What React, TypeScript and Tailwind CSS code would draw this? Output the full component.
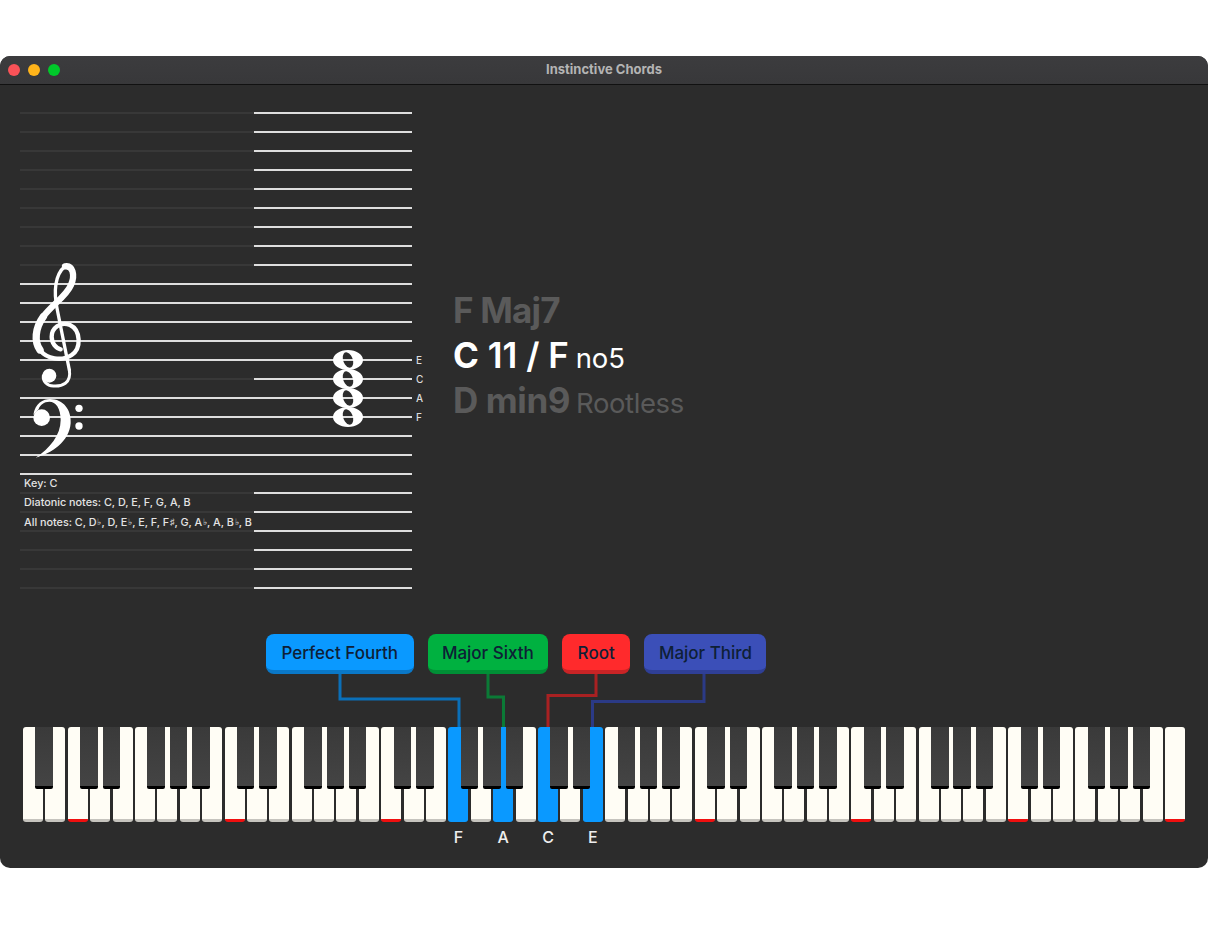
const lines = Array.from({ length: 26 }, (_, i) => i);
// staff lines that run bright all the way across
const fullLines = [9, 10, 11, 12, 13, 15, 16, 17, 18, 19];

const whiteKeys = Array.from({ length: 52 }, (_, i) => i);
const PITCH = 22.39;
// a black key follows C, D, F, G and A, counted from the first C at index 2
const blackKeys = whiteKeys.filter((i) => i < 51 && [0, 1, 3, 4, 5].includes((i + 5) % 7));
const highlighted: Record<number, string> = { 19: "F", 21: "A", 23: "C", 25: "E" };

const labels = [
    { name: "Perfect Fourth", cls: "w-[147.5px] bg-[#0a99ff] border-[#0a78c8]" },
    { name: "Major Sixth", cls: "w-[120px] bg-[#00b140] border-[#008f36]" },
    { name: "Root", cls: "w-[68px] bg-[#ff2a2c] border-[#c92426]" },
    { name: "Major Third", cls: "w-[122px] bg-[#3b4fb8] border-[#2f3f96]" },
];

const Flat = () => <span className="ml-[0.8px] text-[9px] align-[1px]">♭</span>;

const Clefs = () => (
    <svg className="absolute left-0 top-[152px]" width="80" height="210" viewBox="0 0 240 630" fill="none">
        <g stroke="#fff" strokeLinecap="round" strokeLinejoin="round">
            <path d="M148 345 L112 165 C100 110 105 58 135 34" strokeWidth="10" />
            <path d="M135 34 C158 30 166 60 153 90 C138 125 95 150 70 185" strokeWidth="19" />
            <path d="M70 185 C45 220 42 260 60 285" strokeWidth="22" />
            <path d="M60 285 C80 312 125 320 155 300 C185 280 182 225 150 210 C120 198 95 220 95 245 C95 265 108 280 122 283" strokeWidth="13" />
            <path d="M148 345 C155 385 125 395 100 393 C80 392 68 378 70 362" strokeWidth="9" />
        </g>
        <circle cx="88" cy="362" r="21" fill="#fff" />
        <circle cx="65" cy="488" r="25" fill="#fff" />
        <path d="M40 480 C45 445 70 432 90 432 C130 432 155 465 152 505 C148 560 95 595 47 608 C90 580 122 540 122 495 C122 460 108 440 88 440 C72 440 60 450 56 462 Z" fill="#fff" />
        <circle cx="177" cy="460" r="11" fill="#fff" />
        <circle cx="177" cy="513" r="11" fill="#fff" />
    </svg>
);

const WholeNote = () => (
    <svg width="30" height="20" viewBox="0 0 30 20" className="block overflow-visible">
        <path
            fillRule="evenodd"
            fill="#fff"
            d="M0 10 A15 10 0 1 1 30 10 A15 10 0 1 1 0 10 Z M10.7 3.8 A4.5 7.5 -20 1 0 19.3 16.2 A4.5 7.5 -20 1 0 10.7 3.8 Z"
        />
    </svg>
);

const Staff = () => (
    <div className="relative w-[392px] shrink-0">
        {lines.map((i) => {
            const full = fullLines.includes(i);
            return (
                <div key={i} className="flex h-[19px] pt-[9px]">
                    <div className={`h-[2px] w-[234px] ${full ? "bg-[#dedede]" : "bg-[#383838]"}`} />
                    <div className="h-[2px] w-[158px] bg-[#dedede]" />
                </div>
            );
        })}
        <Clefs />
        <div className="absolute left-[313px] top-[247px] flex flex-col">
            {[0, 1, 2, 3].map((n) => (
                <div key={n} className="h-[19px]">
                    <WholeNote />
                </div>
            ))}
        </div>
        <div className="absolute left-[396px] top-[247px] text-[10px] font-medium text-[#dddddd]">
            {["E", "C", "A", "F"].map((n) => (
                <div key={n} className="h-[19px] leading-[20px]">
                    {n}
                </div>
            ))}
        </div>
        <div className="absolute left-[4px] top-[371px] text-[10.8px] font-medium whitespace-nowrap text-[#e4e4e4]">
            <div className="h-[19px] leading-[19px]">Key: C</div>
            <div className="h-[19px] leading-[19px]">Diatonic notes: C, D, E, F, G, A, B</div>
            <div className="h-[19px] leading-[19px]">
                All notes: C, D<Flat />, D, E<Flat />, E, F, F<span className="ml-[0.8px] text-[9px] align-[1px]">♯</span>, G, A<Flat />, A, B<Flat />, B
            </div>
        </div>
    </div>
);

const Chords = () => (
    <div className="ml-[41px] flex flex-col pt-[185px] text-[35px] leading-[45px] whitespace-nowrap">
        <div className="h-[45px] font-bold tracking-[-0.8px] text-[#5a5a5a]">F Maj7</div>
        <div className="h-[45px] font-semibold text-white">
            <span className="font-bold">C</span> 11 / F <span className="-ml-[2px] text-[27.5px] font-normal">no5</span>
        </div>
        <div className="h-[45px] font-bold tracking-[-0.4px] text-[#5a5a5a]">
            D min9 <span className="-ml-[2px] text-[27.5px] font-normal">Rootless</span>
        </div>
    </div>
);

const Connectors = () => (
    <svg className="absolute inset-0" width="1208" height="53" viewBox="0 0 1208 53" fill="none" strokeWidth="3">
        <path d="M340 0 V25 H459 V53" stroke="#0a6fb8" />
        <path d="M488 0 V23 H503.5 V53" stroke="#0b7a36" />
        <path d="M596 0 V21.5 H548 V53" stroke="#a92122" />
        <path d="M704 0 V27.5 H592.5 V53" stroke="#2b3a86" />
    </svg>
);

const Piano = () => (
    <div className="relative mx-[23px] h-[95px]">
        <div className="flex h-full gap-[2.39px]">
            {whiteKeys.map((i) => {
                const on = highlighted[i] !== undefined;
                const isC = (i - 2) % 7 === 0;
                return (
                    <div
                        key={i}
                        className={`flex-1 rounded-[3px] border-b-[3px] ${
                            on
                                ? "border-[#0a99ff] bg-[#0a99ff]"
                                : isC
                                  ? "border-[#f00f0f] bg-[#fffdf5]"
                                  : "border-[#c6c4be] bg-[#fffdf5]"
                        }`}
                    />
                );
            })}
        </div>
        {blackKeys.map((i) => (
            <div
                key={i}
                className="absolute top-0 h-[62px] w-[17.5px] rounded-b-[2px] border-b-[3px] border-black bg-gradient-to-b from-[#3a3a3a] to-[#444444]"
                style={{ left: (i + 1) * PITCH - 1.2 - 8.75 }}
            />
        ))}
    </div>
);

export default function App() {
    return (
        <div className="h-[925px] bg-white pt-[56px] font-[Inter,sans-serif]">
            <div className="flex h-[812px] flex-col overflow-hidden rounded-[10px] bg-[#2c2c2c]">
                <div className="relative flex h-[29px] shrink-0 items-center justify-center border-b border-[#111111] bg-gradient-to-b from-[#3c3c3e] to-[#38383a]">
                    <div className="absolute left-[8px] top-[8px] flex gap-[8px]">
                        <div className="h-[12px] w-[12px] rounded-full bg-[#fa5258]" />
                        <div className="h-[12px] w-[12px] rounded-full bg-[#ffb41a]" />
                        <div className="h-[12px] w-[12px] rounded-full bg-[#00c92a]" />
                    </div>
                    <span className="text-[13px] font-bold text-[#b4b4b4]">Instinctive Chords</span>
                </div>

                <div className="flex pl-[20px] pt-[18px]">
                    <Staff />
                    <Chords />
                </div>

                <div className="mt-[37px] flex gap-[14.33px] pl-[266px]">
                    {labels.map((l) => (
                        <div
                            key={l.name}
                            className={`flex h-[40px] items-center justify-center rounded-[8px] border-b-[4px] pt-[3px] text-[17px] font-medium text-[#0e2036] ${l.cls}`}
                        >
                            {l.name}
                        </div>
                    ))}
                </div>

                <div className="relative h-[53px]">
                    <Connectors />
                </div>

                <Piano />

                <div className="mx-[23px] mt-[5px] flex gap-[2.39px]">
                    {whiteKeys.map((i) => (
                        <div key={i} className="flex-1 text-center text-[16px] leading-[20px] font-medium text-[#eeeeee]">
                            {highlighted[i] ?? ""}
                        </div>
                    ))}
                </div>
            </div>
        </div>
    );
}
